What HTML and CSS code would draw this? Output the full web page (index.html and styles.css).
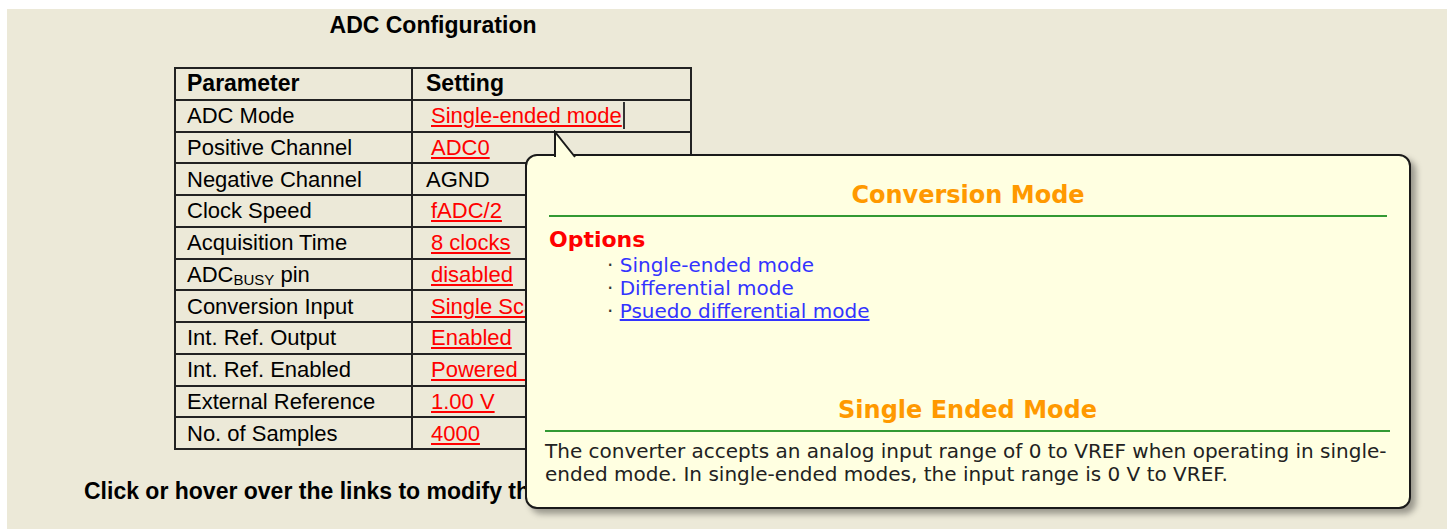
FILE: index.html
```
<!DOCTYPE html>
<html lang="en">
<head>
    <meta charset="UTF-8">
    <title>ADC Configuration</title>
    <link rel="stylesheet" href="styles.css">
</head>
<body>
    <div class="page">
        <div class="panel">
            <h1 class="title">ADC Configuration</h1>

            <table class="config">
                <colgroup>
                    <col class="col-param">
                    <col class="col-setting">
                </colgroup>
                <tr><th>Parameter</th><th>Setting</th></tr>
                <tr><td>ADC Mode</td><td><a href="#" class="opt opt-active">Single-ended mode</a></td></tr>
                <tr><td>Positive Channel</td><td><a href="#" class="opt">ADC0</a></td></tr>
                <tr><td>Negative Channel</td><td>AGND</td></tr>
                <tr><td>Clock Speed</td><td><a href="#" class="opt">fADC/2</a></td></tr>
                <tr><td>Acquisition Time</td><td><a href="#" class="opt">8 clocks</a></td></tr>
                <tr><td>ADC<span class="sub">BUSY</span> pin</td><td><a href="#" class="opt">disabled</a></td></tr>
                <tr><td>Conversion Input</td><td><a href="#" class="opt">Single Scan</a></td></tr>
                <tr><td>Int. Ref. Output</td><td><a href="#" class="opt">Enabled</a></td></tr>
                <tr><td>Int. Ref. Enabled</td><td><a href="#" class="opt">Powered Up</a></td></tr>
                <tr><td>External Reference</td><td><a href="#" class="opt">1.00 V</a></td></tr>
                <tr><td>No. of Samples</td><td><a href="#" class="opt">4000</a></td></tr>
            </table>

            <p class="hint">Click or hover over the links to modify the settings.</p>
        </div>

        <div class="tip">
            <svg class="tip-tail" width="26" height="30" viewBox="0 0 26 30">
                <polygon points="2,2 2,30 25,30" fill="#ffffe1"/>
                <polyline points="2,27 2,2 22,27" fill="none" stroke="#1a1a1a" stroke-width="2"/>
            </svg>

            <div class="tip-options">
                <h2 class="tip-title">Conversion Mode</h2>
                <div class="tip-label">Options</div>
                <ul class="tip-list">
                    <li>&middot; <a href="#">Single-ended mode</a></li>
                    <li>&middot; <a href="#">Differential mode</a></li>
                    <li>&middot; <a href="#" class="hover">Psuedo differential mode</a></li>
                </ul>
            </div>

            <div class="tip-help">
                <h2 class="tip-title">Single Ended Mode</h2>
                <p>The converter accepts an analog input range of 0 to VREF when operating in single-ended mode. In single-ended modes, the input range is 0 V to VREF.</p>
            </div>
        </div>
    </div>
</body>
</html>
```

FILE: styles.css
```
body {
    margin: 0;
    background-color: #ffffff;
    font-family: "Liberation Sans", Arial, sans-serif;
    color: #000000;
}
.page {
    position: relative;
    margin: 9px 6px 0 7px;
    height: 520px;
    background-color: #ece9d8;
    overflow: hidden;
}
.panel {
    width: 852px;
    padding-top: 3px;
}
.title {
    margin: 0 0 29px;
    font-size: 23px;
    line-height: 26px;
    text-align: center;
}
.config {
    margin: 0 auto;
    width: 518px;
    border-collapse: collapse;
    font-size: 22px;
}
.col-param {
    width: 237px;
}
.config th,
.config td {
    height: 29.75px;
    padding: 0 0 0 11px;
    border: 2px solid #222222;
    line-height: 29px;
    text-align: left;
    white-space: nowrap;
}
.config th {
    font-size: 23px;
}
.config th + th,
.config td + td {
    padding-left: 13px;
}
.sub {
    font-size: 15px;
    line-height: 15px;
    vertical-align: -3px;
}
.opt {
    margin-left: 5px;
    color: #ff0000;
}
.opt-active {
    display: inline-block;
    line-height: 27px;
    padding-right: 1px;
    border-right: 2px solid #333333;
}
.hint {
    margin: 28px 0 0 77px;
    font-size: 23px;
    font-weight: bold;
    line-height: 27px;
}
.tip {
    position: absolute;
    left: 518px;
    top: 145px;
    width: 882px;
    height: 351px;
    border: 2px solid #1a1a1a;
    border-radius: 12px;
    background-color: #ffffe1;
    box-shadow: 5px 5px 6px rgba(0, 0, 0, 0.35);
    font-family: "DejaVu Sans", Verdana, sans-serif;
    color: #222222;
}
.tip-tail {
    position: absolute;
    left: 26px;
    top: -26px;
}
.tip-title {
    margin: 0;
    padding-bottom: 6px;
    border-bottom: 2px solid #339933;
    color: #ff9900;
    font-size: 24px;
    line-height: 28px;
    text-align: center;
}
.tip-options {
    padding: 25px 22px 0;
}
.tip-label {
    margin-top: 11px;
    color: #ff0000;
    font-size: 22px;
    font-weight: bold;
    line-height: 24px;
}
.tip-list {
    margin: 2px 0 0;
    padding: 0 0 0 58px;
    list-style: none;
    font-size: 20px;
    line-height: 23px;
    color: #333333;
}
.tip-list a {
    color: #3333ff;
    text-decoration: none;
}
.tip-list a.hover {
    text-decoration: underline;
}
.tip-help {
    margin-top: 73px;
    padding: 0 19px 0 18px;
}
.tip-help p {
    margin: 8px 0 0;
    font-size: 20px;
    line-height: 23px;
}
```
